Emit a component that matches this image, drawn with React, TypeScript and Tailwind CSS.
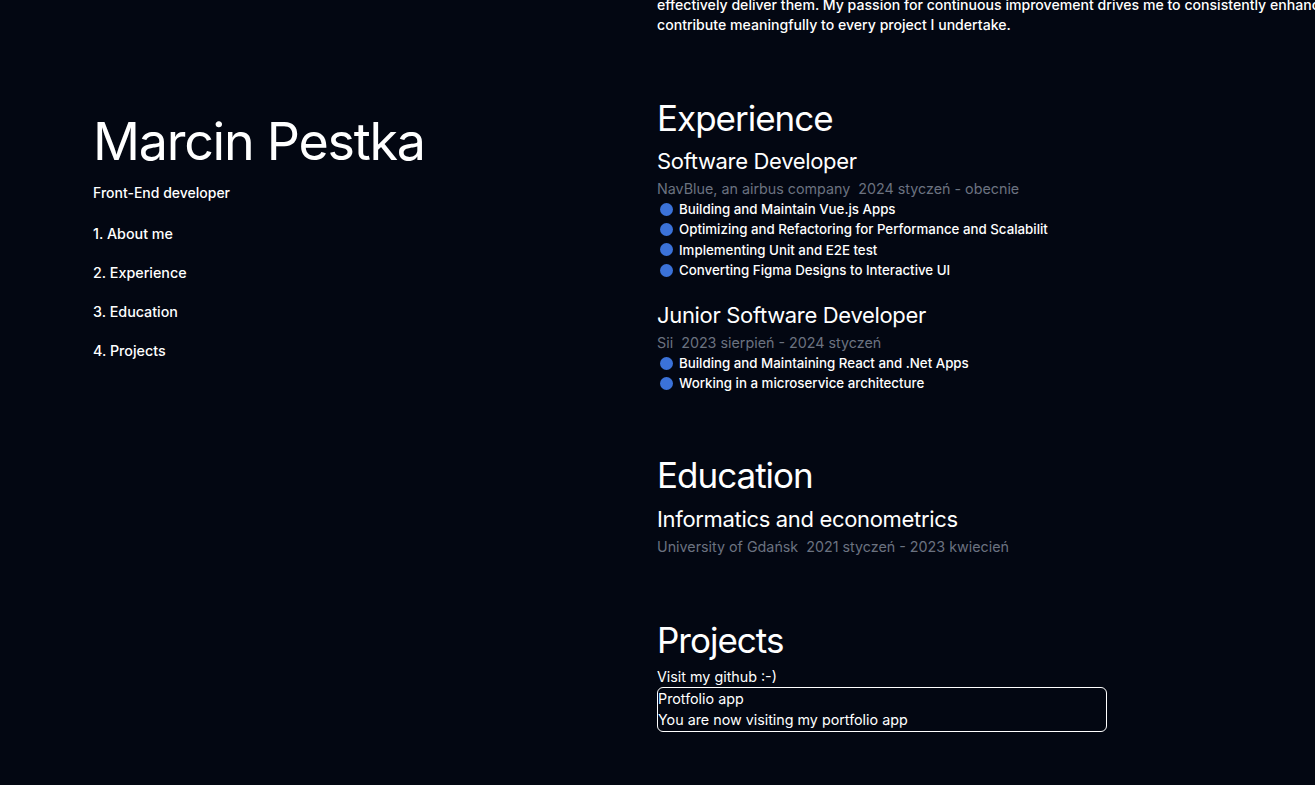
const navItems = ["About me", "Experience", "Education", "Projects"];

const jobs = [
	{
		title: "Software Developer",
		company: "NavBlue, an airbus company",
		period: "2024 styczeń - obecnie",
		tasks: [
			"Building and Maintain Vue.js Apps",
			"Optimizing and Refactoring for Performance and Scalabilit",
			"Implementing Unit and E2E test",
			"Converting Figma Designs to Interactive UI",
		],
	},
	{
		title: "Junior Software Developer",
		company: "Sii",
		period: "2023 sierpień - 2024 styczeń",
		tasks: [
			"Building and Maintaining React and .Net Apps",
			"Working in a microservice architecture",
		],
	},
];

const Meta = ({ place, period }: { place: string; period: string }) => (
	<div className="mt-[3px] text-[14.3px] leading-[20px] text-[#6b7280] whitespace-pre">
		{place}  {period}
	</div>
);

export default function App() {
	return (
		<div
			className="h-[785px] w-full overflow-hidden bg-[#030712] text-white"
			style={{ fontFamily: "Inter, 'Noto Sans', sans-serif" }}>
			<div className="grid grid-cols-[657px_1fr]">
				{/* header / nav */}
				<header className="flex flex-col pl-[93px] pt-[110px]">
					<h1 className="text-[52px] leading-[64px] tracking-[-1.25px]">
						Marcin Pestka
					</h1>
					<p className="mt-[8px] text-[14px] leading-[22px] font-medium">
						Front-End developer
					</p>
					<nav className="mt-[10px] flex flex-col">
						{navItems.map((item, idx) => (
							<a
								key={item}
								className="text-[14.3px] leading-[20px] font-medium py-[9.5px]">
								{idx + 1}. {item}
							</a>
						))}
					</nav>
				</header>

				{/* content */}
				<main className="flex flex-col">
					{/* about me (scrolled) */}
					<p className="-mt-[5px] text-[14.1px] leading-[20px] font-medium whitespace-nowrap">
						effectively deliver them. My passion for continuous improvement drives me to consistently enhance my skills and
						<br />
						contribute meaningfully to every project I undertake.
					</p>

					{/* experience */}
					<section className="mt-[63px] flex flex-col">
						<h2 className="text-[35px] leading-[40px] tracking-[-1px]">Experience</h2>
						<div className="mt-[8px] flex flex-col gap-[20px]">
							{jobs.map((job) => (
								<div key={job.title} className="flex flex-col">
									<h3 className="text-[22px] leading-[30px] tracking-[-0.33px]">
										{job.title}
									</h3>
									<Meta place={job.company} period={job.period} />
									<ul className="flex flex-col">
										{job.tasks.map((task) => (
											<li
												key={task}
												className="flex items-center gap-[6px] text-[13.3px] leading-[20.3px] font-medium pl-[3px]">
												<span className="size-[13px] rounded-full bg-[#3b72d9] shrink-0" />
												{task}
											</li>
										))}
									</ul>
								</div>
							))}
						</div>
					</section>

					{/* education */}
					<section className="mt-[61px] flex flex-col">
						<h2 className="text-[35px] leading-[40px] tracking-[-1px]">Education</h2>
						<h3 className="mt-[9px] text-[22px] leading-[30px] tracking-[-0.33px]">
							Informatics and econometrics
						</h3>
						<Meta place="University of Gdańsk" period="2021 styczeń - 2023 kwiecień" />
					</section>

					{/* projects */}
					<section className="mt-[63px] flex flex-col">
						<h2 className="text-[35px] leading-[40px] tracking-[-1px]">Projects</h2>
						<p className="mt-[6px] text-[14.3px] leading-[21px]">Visit my github :-)</p>
						<div className="w-[450px] border border-white rounded-[6px] flex flex-col text-[14.3px] leading-[21.5px]">
							<span>Protfolio app</span>
							<span>You are now visiting my portfolio app</span>
						</div>
					</section>
				</main>
			</div>
		</div>
	);
}
